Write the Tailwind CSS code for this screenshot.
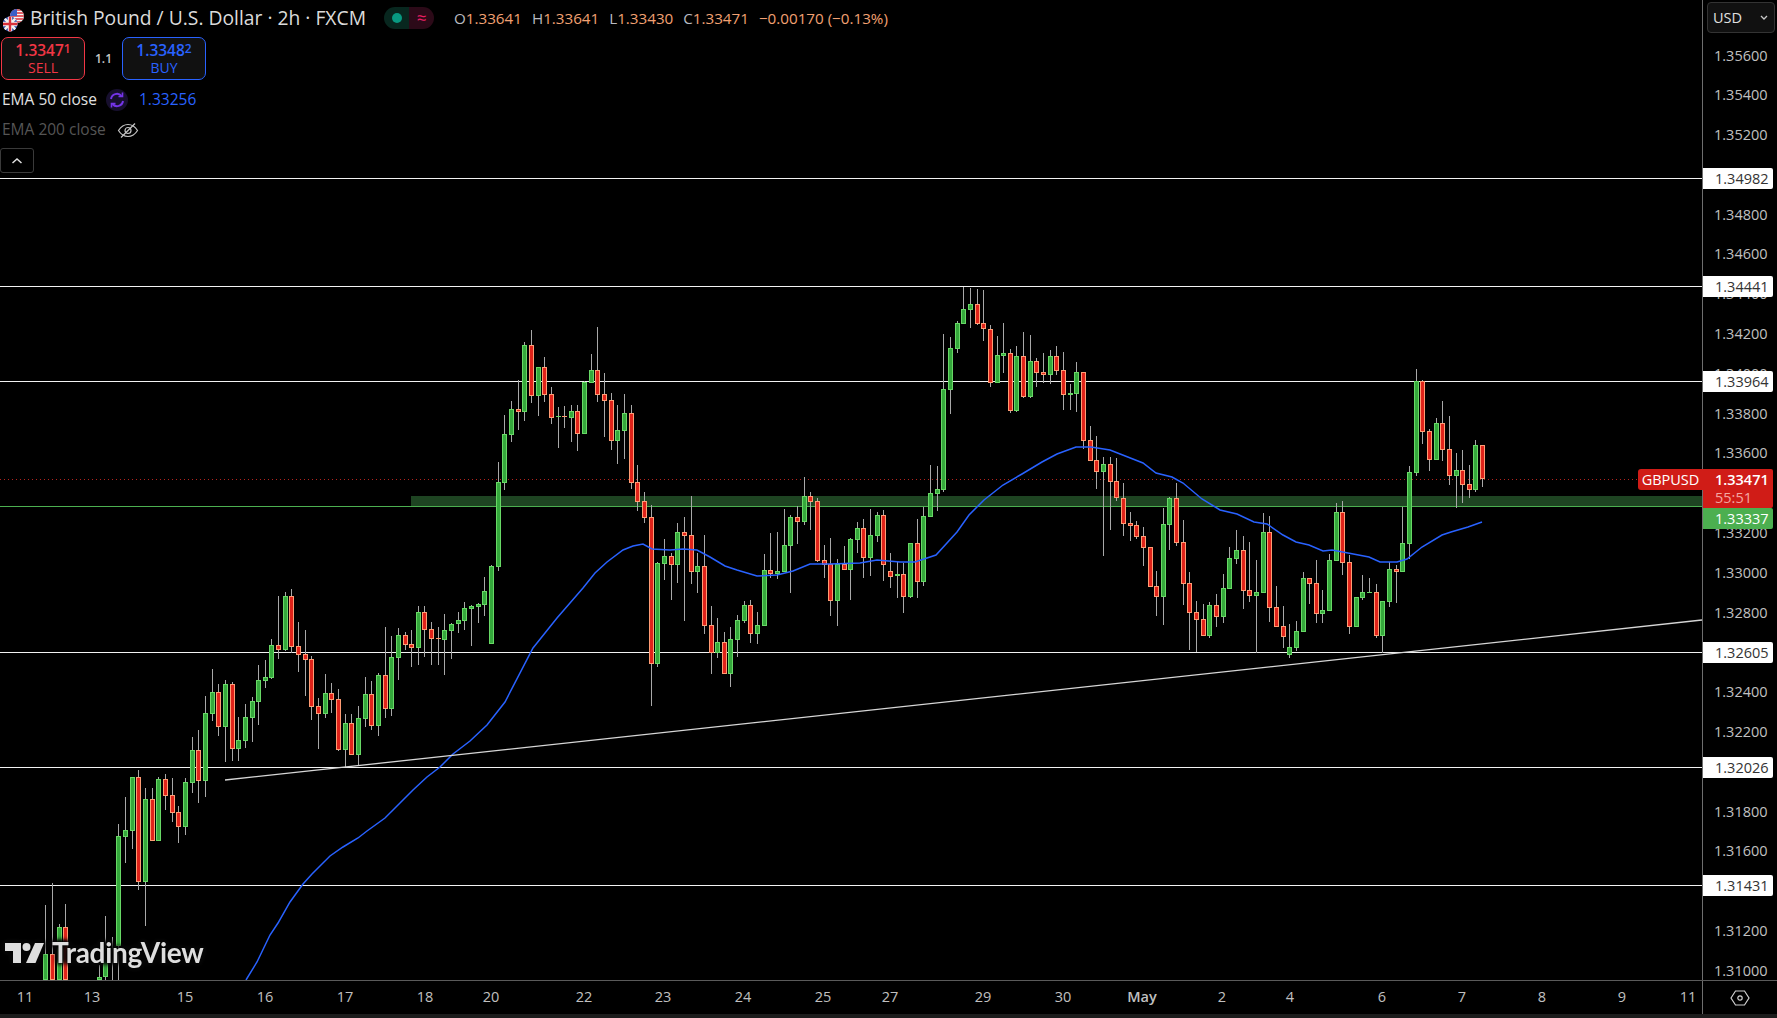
<!DOCTYPE html>
<html lang="en">
<head>
  <meta charset="UTF-8">
  <title>GBPUSD 2h chart</title>
  <script src="https://cdn.jsdelivr.net/npm/@tailwindcss/browser@4"></script>
</head>
<body class="bg-black overflow-hidden font-['Open_Sans','Noto_Sans',sans-serif]">
  <div class="h-screen flex flex-col bg-black">
    <div class="flex h-[980px]">
      <!-- chart pane -->
      <div class="relative w-[1702px] h-[980px] overflow-hidden">
        <svg id="chart" class="absolute inset-0" width="1702" height="980" viewBox="0 0 1702 980" shape-rendering="crispEdges"></svg>

        <!-- legend -->
        <div class="absolute left-0 top-0 flex flex-col items-start">
          <div class="flex items-center h-[36px]">
            <svg class="ml-[3px] shrink-0" width="24" height="30" viewBox="0 0 24 30">
              <defs>
                <clipPath id="us"><circle cx="17" cy="13" r="7"/></clipPath>
                <clipPath id="uk"><circle cx="10" cy="21" r="7.5"/></clipPath>
              </defs>
              <g clip-path="url(#us)" transform="translate(-3 0)">
                <rect x="10" y="6" width="14" height="14" fill="#f5f5f5"/>
                <path d="M10 7h14M10 10h14M10 13h14M10 16h14M10 19h14" stroke="#d8303a" stroke-width="1.5"/>
                <rect x="10" y="6" width="7" height="7" fill="#3a5fc8"/>
              </g>
              <g clip-path="url(#uk)" transform="translate(-3 0)">
                <rect x="2" y="13" width="16" height="16" fill="#2c4aa8"/>
                <path d="M2 13l16 16M18 13L2 29" stroke="#f0f0f0" stroke-width="2.6"/>
                <path d="M10 13v16M2 21h16" stroke="#f0f0f0" stroke-width="4.4"/>
                <path d="M10 13v16M2 21h16" stroke="#d8303a" stroke-width="2.4"/>
              </g>
            </svg>
            <span class="ml-[3px] text-[19.3px] leading-none text-[#dbdbdb] whitespace-nowrap w-[354px] -mt-[1px]">British Pound / U.S. Dollar · 2h · FXCM</span>
            <div class="flex h-[22px] w-[50px] rounded-full overflow-hidden">
              <div class="w-[25px] bg-[#08271f] flex items-center justify-center"><span class="w-[10px] h-[10px] rounded-full bg-[#089981]"></span></div>
              <div class="w-[25px] bg-[#2c0a18] flex items-center justify-center text-[#e91e63] text-[17px] leading-[22px]">≈</div>
            </div>
            <div class="ml-[20px] flex gap-[10px] text-[15.2px] text-[#f2a172] whitespace-nowrap">
              <span><span class="text-[#b8bac0]">O</span>1.33641</span>
              <span><span class="text-[#b8bac0]">H</span>1.33641</span>
              <span><span class="text-[#b8bac0]">L</span>1.33430</span>
              <span><span class="text-[#b8bac0]">C</span>1.33471</span>
              <span>−0.00170 (−0.13%)</span>
            </div>
          </div>

          <div class="flex items-center ml-[1px] mt-[1px]">
            <div class="w-[84px] h-[43px] rounded-[7px] border border-[#f23645] bg-[#111] flex flex-col items-center justify-center text-[#f23645]">
              <div class="text-[15.5px] leading-[18px] font-semibold">1.3347<sup class="text-[12px] top-[-3px]">1</sup></div>
              <div class="text-[14px] leading-[18px]">SELL</div>
            </div>
            <div class="w-[37px] text-center text-[12px] text-[#c8c8c8] font-semibold">1.1</div>
            <div class="w-[84px] h-[43px] rounded-[7px] border border-[#2962ff] bg-[#111] flex flex-col items-center justify-center text-[#2962ff]">
              <div class="text-[15.5px] leading-[18px] font-semibold">1.3348<sup class="text-[12px] top-[-3px]">2</sup></div>
              <div class="text-[14px] leading-[18px]">BUY</div>
            </div>
          </div>

          <div class="flex items-center h-[30px] mt-[5px] ml-[2px]">
            <span class="text-[15.5px] text-[#e0e0e0] w-[104px] whitespace-nowrap">EMA 50 close</span>
            <span class="w-[22px] h-[22px] rounded-full bg-[#170f2e] flex items-center justify-center">
              <svg width="18" height="18" viewBox="0 0 18 18" fill="none" stroke="#7434e8" stroke-width="2">
                <path d="M3 8a6 6 0 0 1 10.5-3"/><path d="M15 10a6 6 0 0 1-10.5 3"/>
                <path d="M14.5 1.5v4h-4M3.5 16.500v-4h4" stroke-width="1.600"/>
              </svg>
            </span>
            <span class="ml-[11px] text-[15.5px] text-[#2962ff]">1.33256</span>
          </div>

          <div class="flex items-center h-[30px] ml-[2px]">
            <span class="text-[15.5px] text-[#555] w-[115px] whitespace-nowrap">EMA 200 close</span>
            <svg width="22" height="18" viewBox="0 0 22 18" fill="none" stroke="#c4c4c4" stroke-width="1.200">
              <path d="M1.500 9.500C4 5.500 7 3.500 11 3.500s7 2 9.500 6c-2.500 4-5.500 6-9.500 6s-7-2-9.500-6z"/>
              <circle cx="11" cy="9.500" r="3"/>
              <path d="M4 16.500L18 2.500"/>
            </svg>
          </div>

          <button class="mt-[3px] w-[34px] h-[25px] rounded-[3px] border border-[#3a3a3a] flex items-center justify-center">
            <svg width="12" height="8" viewBox="0 0 12 8" fill="none" stroke="#e0e0e0" stroke-width="1.500"><path d="M1.500 6L6 2l4.500 4"/></svg>
          </button>
        </div>

        <!-- watermark -->
        <div class="absolute left-[5px] top-[935px] flex items-center gap-[8px] [filter:drop-shadow(0_0_2px_#000)_drop-shadow(0_0_2px_#000)_drop-shadow(0_0_1px_#111)]">
          <svg width="39" height="21" viewBox="0 0 39 21" fill="#dedede">
            <path d="M0 1h16v20H8V9H0z"/>
            <circle cx="21.500" cy="5" r="4"/>
            <path d="M30 1h9l-8.500 20h-9.500z"/>
          </svg>
          <span class="text-[28px] leading-[34px] font-bold text-[#dedede] tracking-[-0.3px] font-['Lato',sans-serif]">TradingView</span>
        </div>
      </div>

      <!-- price scale -->
      <div class="relative w-[75px] h-[980px] border-l border-[#6e6e6e] overflow-hidden text-[14.5px] text-[#c0c0c0]">
        <div class="flex flex-col pt-[35.5px] pl-[11px]">
          <div class="h-[39.8px] leading-[39.8px]">1.35600</div>
          <div class="h-[39.8px] leading-[39.8px]">1.35400</div>
          <div class="h-[39.8px] leading-[39.8px]">1.35200</div>
          <div class="h-[39.8px]"></div>
          <div class="h-[39.8px] leading-[39.8px]">1.34800</div>
          <div class="h-[39.8px] leading-[39.8px]">1.34600</div>
          <div class="h-[39.8px] leading-[39.8px]">1.34400</div>
          <div class="h-[39.8px] leading-[39.8px]">1.34200</div>
          <div class="h-[39.8px] leading-[39.8px]">1.34000</div>
          <div class="h-[39.8px] leading-[39.8px]">1.33800</div>
          <div class="h-[39.8px] leading-[39.8px]">1.33600</div>
          <div class="h-[39.8px]"></div>
          <div class="h-[39.8px] leading-[39.8px]">1.33200</div>
          <div class="h-[39.8px] leading-[39.8px]">1.33000</div>
          <div class="h-[39.8px] leading-[39.8px]">1.32800</div>
          <div class="h-[39.8px]"></div>
          <div class="h-[39.8px] leading-[39.8px]">1.32400</div>
          <div class="h-[39.8px] leading-[39.8px]">1.32200</div>
          <div class="h-[39.8px]"></div>
          <div class="h-[39.8px] leading-[39.8px]">1.31800</div>
          <div class="h-[39.8px] leading-[39.8px]">1.31600</div>
          <div class="h-[39.8px] leading-[39.8px]">1.31400</div>
          <div class="h-[39.8px] leading-[39.8px]">1.31200</div>
          <div class="h-[39.8px] leading-[39.8px]">1.31000</div>
        </div>

        <!-- currency select -->
        <div class="absolute left-[4px] top-[2px] w-[68px] h-[31px] rounded-[4px] border border-[#333] bg-[#111] flex items-center justify-between pl-[5px] pr-[6px] text-[#e0e0e0] text-[14.5px]">
          USD
          <svg width="8" height="5" viewBox="0 0 8 5" fill="none" stroke="#c8c8c8" stroke-width="1.300"><path d="M1 1l3 3 3-3"/></svg>
        </div>

        <!-- level tags -->
        <div class="absolute left-0 top-[168px] w-[70px] h-[21px] leading-[21px] pl-[12px] bg-white text-[#333] rounded-r-[2px]">1.34982</div>
        <div class="absolute left-0 top-[276px] w-[70px] h-[21px] leading-[21px] pl-[12px] bg-white text-[#333] rounded-r-[2px]">1.34441</div>
        <div class="absolute left-0 top-[371px] w-[70px] h-[21px] leading-[21px] pl-[12px] bg-white text-[#333] rounded-r-[2px]">1.33964</div>
        <div class="absolute left-0 top-[642px] w-[70px] h-[21px] leading-[21px] pl-[12px] bg-white text-[#333] rounded-r-[2px]">1.32605</div>
        <div class="absolute left-0 top-[757px] w-[70px] h-[21px] leading-[21px] pl-[12px] bg-white text-[#333] rounded-r-[2px]">1.32026</div>
        <div class="absolute left-0 top-[875px] w-[70px] h-[21px] leading-[21px] pl-[12px] bg-white text-[#333] rounded-r-[2px]">1.31431</div>
        <div class="absolute left-0 top-[469px] w-[70px] h-[39px] pl-[12px] bg-[#d01c17] rounded-r-[2px] text-white">
          <div class="h-[21px] leading-[21px] font-semibold">1.33471</div>
          <div class="h-[18px] leading-[16px] text-[#f4a8a2]">55:51</div>
        </div>
        <div class="absolute left-0 top-[508px] w-[70px] h-[21px] leading-[21px] pl-[12px] bg-[#4caf50] text-white rounded-r-[2px]">1.33337</div>
      </div>

      <!-- symbol tag sits across the scale edge -->
      <div class="absolute left-[1638px] top-[469px] w-[65px] h-[21px] leading-[21px] text-center text-[14.5px] text-white bg-[#d01c17] rounded-l-[3px]">GBPUSD</div>
    </div>

    <!-- time axis -->
    <div class="flex h-[34px] border-t border-[#5a5a5a] text-[14.5px] text-[#c0c0c0]">
      <div class="relative w-[1702px]">
        <span class="absolute top-[5px] -translate-x-1/2 left-[25px]">11</span>
        <span class="absolute top-[5px] -translate-x-1/2 left-[92px]">13</span>
        <span class="absolute top-[5px] -translate-x-1/2 left-[185px]">15</span>
        <span class="absolute top-[5px] -translate-x-1/2 left-[265px]">16</span>
        <span class="absolute top-[5px] -translate-x-1/2 left-[345px]">17</span>
        <span class="absolute top-[5px] -translate-x-1/2 left-[425px]">18</span>
        <span class="absolute top-[5px] -translate-x-1/2 left-[491px]">20</span>
        <span class="absolute top-[5px] -translate-x-1/2 left-[584px]">22</span>
        <span class="absolute top-[5px] -translate-x-1/2 left-[663px]">23</span>
        <span class="absolute top-[5px] -translate-x-1/2 left-[743px]">24</span>
        <span class="absolute top-[5px] -translate-x-1/2 left-[823px]">25</span>
        <span class="absolute top-[5px] -translate-x-1/2 left-[890px]">27</span>
        <span class="absolute top-[5px] -translate-x-1/2 left-[983px]">29</span>
        <span class="absolute top-[5px] -translate-x-1/2 left-[1063px]">30</span>
        <span class="absolute top-[5px] -translate-x-1/2 left-[1142px] font-semibold">May</span>
        <span class="absolute top-[5px] -translate-x-1/2 left-[1222px]">2</span>
        <span class="absolute top-[5px] -translate-x-1/2 left-[1290px]">4</span>
        <span class="absolute top-[5px] -translate-x-1/2 left-[1382px]">6</span>
        <span class="absolute top-[5px] -translate-x-1/2 left-[1462px]">7</span>
        <span class="absolute top-[5px] -translate-x-1/2 left-[1542px]">8</span>
        <span class="absolute top-[5px] -translate-x-1/2 left-[1622px]">9</span>
        <span class="absolute top-[5px] -translate-x-1/2 left-[1688px]">11</span>
      </div>
      <div class="w-[75px] border-l border-[#6e6e6e] flex items-center justify-center">
        <svg width="20" height="16" viewBox="0 0 20 16" fill="none" stroke="#d0d0d0" stroke-width="1.200">
          <path d="M1 8l4.500-7h9L19 8l-4.500 7h-9z"/><circle cx="10" cy="8" r="2.200"/>
        </svg>
      </div>
    </div>
    <div class="h-[4px] bg-[#1c1c1c]"></div>
  </div>

  <script>
    // [wick top, body top, body bottom, wick bottom, 1 = up bar]
    const bars = [
      [905,954,980,980,1],[883,954,980,980,0],[924,927,980,980,1],[904,927,980,980,0],
      null,null,null,null,
      [965,977,980,980,1],[916,950,977,980,1],[937,980,980,980,1],[824,836,946,980,1],
      [797,830,837,863,1],[777,777,831,849,1],[770,777,882,890,0],[788,799,882,926,1],
      [788,799,841,841,0],[777,779,841,841,1],[774,779,796,810,0],[778,795,813,822,0],
      [806,812,827,843,0],[778,782,827,835,1],[737,750,783,793,1],[730,750,781,803,0],
      [696,713,781,797,1],[669,692,714,721,1],[684,692,727,736,0],[680,684,727,762,1],
      [682,684,749,761,0],[717,740,749,761,1],[704,717,741,748,1],[697,701,718,742,1],
      [665,680,702,725,1],[660,677,681,688,1],[639,645,678,679,1],[596,645,650,659,0],
      [592,596,650,651,1],[589,596,647,653,0],[622,646,655,672,0],[630,654,660,696,0],
      [656,659,707,720,0],[698,706,714,749,0],[674,693,714,718,1],[683,693,700,713,0],
      [689,699,750,751,0],[714,723,750,767,1],[714,723,755,755,0],[706,718,755,766,1],
      [677,694,719,727,1],[681,694,726,730,0],[673,675,726,736,1],[627,675,709,718,0],
      [636,657,709,716,1],[628,635,658,680,1],[632,635,645,650,0],[630,644,648,667,0],
      [606,612,648,665,1],[606,612,630,657,0],[622,629,639,665,0],[627,638,639,665,0],
      [614,630,640,675,1],[623,624,631,659,1],[612,620,624,633,1],[602,608,621,630,1],
      [605,606,609,646,1],[603,604,607,623,1],[577,591,605,616,1],[565,566,644,644,1],
      [462,482,567,571,1],[415,434,483,490,1],[401,409,435,442,1],[380,409,412,430,0],
      [342,345,412,421,1],[330,345,396,403,0],[367,367,396,416,1],[357,367,395,402,0],
      [387,394,418,424,0],[407,416,417,448,1],[406,416,417,428,0],[405,411,418,442,1],
      [405,411,434,451,0],[381,382,434,434,1],[354,370,383,383,1],[327,370,395,402,0],
      [373,394,401,437,0],[393,400,441,450,0],[405,430,441,464,1],[394,413,431,459,1],
      [405,413,483,489,0],[465,482,502,511,0],[492,501,518,523,0],[505,517,664,706,0],
      [562,563,664,667,1],[539,556,564,580,1],[553,556,565,600,0],[523,532,565,583,1],
      [517,532,536,621,0],[496,535,572,584,0],[553,566,572,593,1],[535,566,626,634,0],
      [606,625,653,674,0],[618,642,653,658,1],[632,642,674,674,0],[627,639,674,687,1],
      [615,620,640,657,1],[601,605,621,623,1],[600,605,634,643,0],[612,625,634,644,1],
      [554,570,626,626,1],[533,570,574,578,0],[532,571,574,579,1],[509,545,572,572,1],
      [515,517,546,593,1],[506,517,522,544,0],[477,496,522,525,1],[492,496,502,530,0],
      [498,501,561,562,0],[545,560,565,578,0],[538,564,601,616,0],[559,564,601,626,1],
      [546,564,570,570,0],[538,539,570,600,1],[522,528,540,553,1],[519,528,558,578,0],
      [509,535,558,576,1],[512,515,536,542,1],[510,515,565,581,0],[553,571,577,588,0],
      [562,574,576,598,1],
      [563,574,597,613,0],[543,543,597,598,1],[519,543,582,598,0],[507,516,582,586,1],
      [465,493,517,517,1],[466,489,494,511,1],[334,389,490,492,1],[337,348,390,414,1],
      [321,323,349,353,1],[287,309,324,324,1],[288,304,310,328,1],[289,304,324,325,0],
      [290,323,329,341,0],[325,329,383,387,0],[336,355,383,383,1],[323,353,356,373,1],
      [349,353,411,413,0],[346,356,411,412,1],[332,356,397,398,0],[335,361,397,398,1],
      [358,361,373,387,0],[353,372,375,383,0],[350,356,375,384,1],[346,356,371,375,0],
      [352,370,395,410,0],[384,393,395,410,1],[362,372,394,412,1],[372,372,441,449,0],
      [426,440,461,461,0],[436,460,472,489,0],[457,464,472,556,1],[457,464,482,530,0],
      [458,481,498,501,0],[483,498,524,536,0],[512,523,526,541,0],[521,525,537,539,0],
      [527,536,548,566,0],[547,547,587,587,0],[571,586,597,616,0],[508,524,597,625,1],
      [497,498,525,550,1],[483,498,543,546,0],[520,542,584,605,0],[572,583,613,650,0],
      [601,612,620,652,0],[604,619,636,636,0],[602,605,636,638,1],[594,605,617,627,0],
      [574,588,617,623,1],[547,558,589,589,1],[530,550,559,564,1],[536,550,591,609,0],
      [542,590,596,602,0],[560,592,596,653,1],[513,532,593,593,1],[516,532,608,622,0],
      [586,607,627,627,0],[606,626,637,648,0],[624,647,655,658,1],[621,631,648,651,1],
      [572,578,632,632,1],[578,578,584,604,0],[560,583,614,623,0],[590,610,614,623,1],
      [554,560,611,611,1],[503,512,561,561,1],[501,512,563,575,0],[555,562,627,634,0],
      [597,597,627,627,1],[575,592,598,600,1],[578,592,593,593,1],[584,592,636,638,0],
      [601,601,636,653,1],[562,569,602,607,1],[565,569,572,603,0],[507,543,572,572,1],
      [466,472,544,559,1],[369,381,473,476,1],[380,381,432,444,0],[429,431,460,471,0],
      [418,423,460,460,1],[401,423,450,461,0],[416,449,476,485,0],[453,470,476,508,1],
      [450,470,485,503,0],[465,484,490,498,0],[440,445,490,492,1],[445,445,479,487,0]
    ];

    const ema = [[246,980],[257,962],[270,935],[278,923],[290,902],[303,884],[312,874],[330,856],[343,847],[358,838],[367,831],[385,818],[400,803],[413,790],[427,777],[440,767],[453,754],[470,741],[487,725],[505,702],[533,648],[537,643],[557,618],[570,603],[583,588],[595,573],[607,562],[623,550],[633,546],[643,544],[652,549],[670,550],[683,549],[697,550],[710,557],[725,566],[737,570],[757,576],[777,575],[793,571],[810,564],[830,564],[860,563],[877,560],[900,562],[915,562],[936,555],[957,532],[969,515],[984,500],[1003,485],[1022,474],[1042,462],[1057,454],[1076,447],[1091,447],[1110,450],[1143,463],[1156,473],[1172,477],[1183,483],[1202,499],[1220,510],[1237,514],[1254,522],[1267,524],[1283,535],[1296,542],[1309,545],[1323,551],[1332,550],[1348,553],[1369,557],[1380,562],[1397,562],[1407,559],[1422,547],[1442,535],[1451,532],[1468,527],[1482,522]];

    let out = "";
    const rect = (x, y, w, h, fill) => `<rect x="${x}" y="${y}" width="${w}" height="${h}" fill="${fill}"/>`;

    // horizontal levels
    [178, 286, 381, 652, 767, 885].forEach(y => out += rect(0, y, 1702, 1, "#f2f2f2"));

    // zone + current price + entry line
    out += rect(411, 496, 1291, 11, "#1e4422");
    out += `<line x1="0" y1="479.500" x2="1702" y2="479.500" stroke="#b3231e" stroke-dasharray="1 3"/>`;
    out += rect(0, 506, 1702, 1, "#4caf50");

    // candles
    bars.forEach((b, i) => {
      if (!b) return;
      const x = Math.round(45.3 + 6.652 * i);
      const [hi, top, bot, lo, up] = b;
      out += rect(x, hi, 1, lo - hi, "#a8a8a8");
      const h = Math.max(bot - top, 1);
      out += rect(x - 2, top, 5, h, up ? "#68d866" : "#ff9c74");
      if (h > 2) out += rect(x - 1, top + 1, 3, h - 2, up ? "#35a83c" : "#e0231a");
    });

    // ema + trend line
    out += `<polyline points="${ema.join(" ")}" fill="none" stroke="#2962ff" stroke-width="1.500" shape-rendering="geometricPrecision"/>`;
    out += `<line x1="225" y1="780" x2="1702" y2="620" stroke="#d6d6d6" stroke-width="1.300" shape-rendering="geometricPrecision"/>`;

    document.getElementById("chart").innerHTML = out;
  </script>
</body>
</html>
